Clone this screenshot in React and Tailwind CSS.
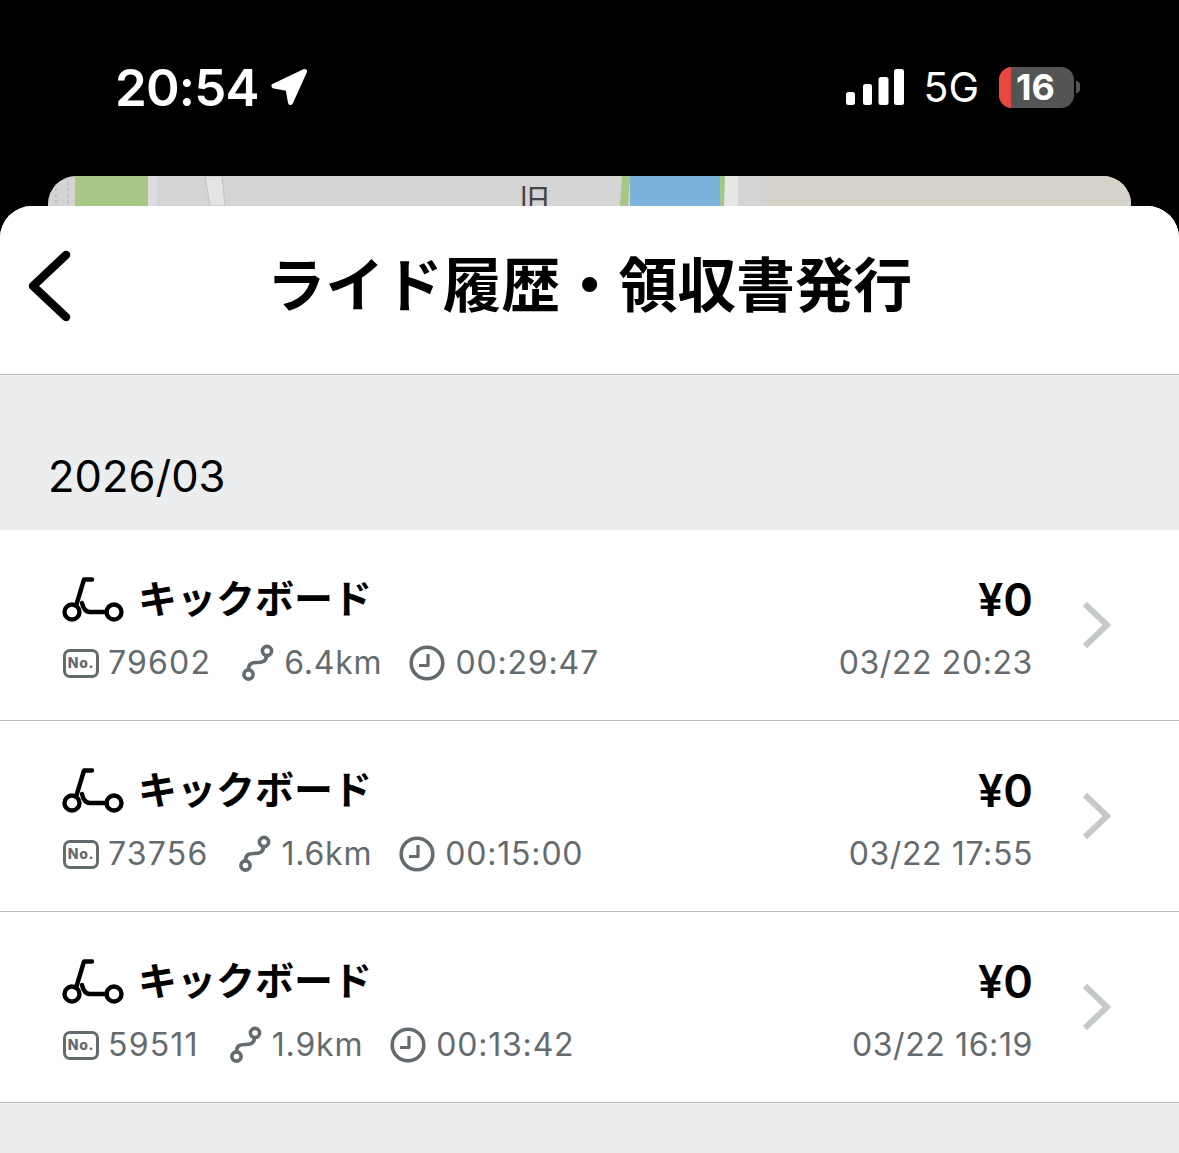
const latin = "font-['Inter','Noto_Sans_CJK_JP',sans-serif]";
const jp = "font-['Noto_Sans_CJK_JP','Noto_Sans',sans-serif]";

const rides = [
  { no: "79602", dist: "6.4km", time: "00:29:47", at: "03/22 20:23" },
  { no: "73756", dist: "1.6km", time: "00:15:00", at: "03/22 17:55" },
  { no: "59511", dist: "1.9km", time: "00:13:42", at: "03/22 16:19" },
];

function LocationArrow() {
  return (
    <svg width="40" height="40" viewBox="0 0 40 40" className="block">
      <path d="M35.5 4.5 L5 19 L19 21.5 L21.5 35.5 Z" fill="#fff" stroke="#fff" strokeWidth="5" strokeLinejoin="round" />
    </svg>
  );
}

function Signal() {
  return (
    <svg width="58" height="36" viewBox="0 0 58 36" className="block" fill="#fff">
      <rect x="0" y="23" width="9" height="13" rx="2.5" />
      <rect x="17" y="15" width="9" height="21" rx="2.5" />
      <rect x="32.5" y="8" width="10" height="28" rx="2.5" />
      <rect x="48" y="0" width="10" height="36" rx="2.5" />
    </svg>
  );
}

function Battery() {
  return (
    <div className="flex items-center gap-[2px]">
      <div className="relative h-[41px] w-[75px] overflow-hidden rounded-[13px] bg-[#545454]">
        <div className="h-full w-[12px] bg-[#e8483f]" />
        <span className={`absolute inset-y-0 left-[17px] flex items-center text-[36px] leading-none font-bold text-white ${latin}`}>16</span>
      </div>
      <div className="h-[12px] w-[4px] rounded-r-full bg-[#545454]" />
    </div>
  );
}

// Strip of the map that peeks out behind the sheet
function MapStrip() {
  return (
    <div className="mx-[48px] h-[30px] overflow-hidden rounded-t-[28px]">
      <svg width="1083" height="30" viewBox="0 0 1083 30" className="block">
        <rect width="1083" height="30" fill="#d4d4d4" />
        <rect x="717" width="366" height="30" fill="#d5d3ca" />
        <rect x="27" width="73" height="30" fill="#a6c785" />
        <path d="M100 0h9v30h-9z" fill="#dcdce0" />
        <path d="M157 0h17l3 30h-15z" fill="#e4e4e4" stroke="#c4c4c4" />
        <path d="M8 0v30M20 0v30" stroke="#bfc3c9" strokeWidth="2" strokeDasharray="3 3" />
        <path d="M574 0h8l-2 30h-8z" fill="#a6c785" />
        <rect x="582" width="90" height="30" fill="#7cb3dd" />
        <path d="M672 0h5v30h-5z" fill="#a6c785" />
        <path d="M677 0h13v30h-14z" fill="#e6e6e6" />
        <text x="471" y="35" fontSize="31" fill="#444" fontFamily="Noto Sans CJK JP">旧</text>
      </svg>
    </div>
  );
}

function ScooterIcon() {
  return (
    <svg width="62" height="46" viewBox="0 0 62 46" fill="none" stroke="#000" strokeWidth="4.4" strokeLinecap="round" strokeLinejoin="round" className="block shrink-0">
      <path d="M30 2.5 H22 L14 29" />
      <path d="M20 26 Q22 35 28 35 H45" />
      <circle cx="10" cy="35" r="7.5" />
      <circle cx="52" cy="35" r="7.5" />
    </svg>
  );
}

function NoBadge() {
  return (
    <div className={`ml-[1px] flex h-[29px] w-[36px] shrink-0 items-center justify-center rounded-[7px] border-[3.5px] border-[#636b6e] text-[14px] leading-none font-extrabold text-[#636b6e] ${latin}`}>
      No.
    </div>
  );
}

function RouteIcon() {
  return (
    <svg width="32" height="38" viewBox="0 0 32 38" fill="none" stroke="#636b6e" strokeWidth="3.6" className="block shrink-0">
      <circle cx="6.5" cy="30.5" r="4.6" />
      <circle cx="25" cy="7" r="4.6" />
      <path d="M24.5 12 C24 18 20 18.5 15 18.5 C9 18.5 6.5 20 6.5 26" />
    </svg>
  );
}

function ClockIcon() {
  return (
    <svg width="36" height="36" viewBox="0 0 36 36" fill="none" stroke="#636b6e" className="block shrink-0">
      <circle cx="18" cy="18" r="15.8" strokeWidth="3.6" />
      <path d="M19 9 V20.5 H10" strokeWidth="3.2" strokeLinejoin="round" />
    </svg>
  );
}

function RideRow({ ride }) {
  return (
    <div className="flex h-[191px] border-b border-[#b9b9b9] bg-white pl-[62px] pr-[68px]">
      <div className="min-w-0 flex-1 pt-[46px]">
        <div className="flex h-[48px] items-center gap-[14px]">
          <ScooterIcon />
          <span className={`pb-[7px] text-[39px] leading-none font-bold text-black ${jp}`}>キックボード</span>
        </div>
        <div className={`mt-[19px] flex h-[40px] items-center text-[32px] tracking-[0.8px] text-[#636b6e] ${latin}`}>
          <NoBadge />
          <span className="ml-[9px] tracking-[1.2px]">{ride.no}</span>
          <span className="ml-[31px]"><RouteIcon /></span>
          <span className="ml-[10px]">{ride.dist}</span>
          <span className="ml-[27px]"><ClockIcon /></span>
          <span className="ml-[10px]">{ride.time}</span>
        </div>
      </div>
      <div className={`flex flex-col items-end pt-[46px] ${latin}`}>
        <div className="flex h-[48px] items-center pb-[1px] text-[45px] leading-none font-semibold text-black">¥0</div>
        <div className="mt-[19px] flex h-[40px] items-center text-[32px] tracking-[0.6px] text-[#636b6e]">{ride.at}</div>
      </div>
      <div className="ml-[48px] flex items-center">
        <svg width="30" height="48" viewBox="0 0 30 48" fill="none" className="block">
          <path d="M4 3 L26 24 L4 45" stroke="#c5c9c9" strokeWidth="6" />
        </svg>
      </div>
    </div>
  );
}

export default function App() {
  return (
    <div className="flex h-[1153px] flex-col overflow-hidden bg-black">
      <div className="flex h-[176px] items-start justify-between pl-[115px] pr-[99px] pt-[60px]">
        <div className="flex h-[54px] items-center gap-[10px]">
          <span className={`text-[51px] leading-none font-semibold tracking-[-0.8px] text-white ${latin}`}>20:54</span>
          <LocationArrow />
        </div>
        <div className="flex h-[54px] items-center">
          <Signal />
          <span className={`ml-[19px] text-[41px] leading-none font-normal text-white ${latin}`}>5G</span>
          <span className="ml-[20px]"><Battery /></span>
        </div>
      </div>

      <MapStrip />

      <div className="flex flex-1 flex-col overflow-hidden rounded-t-[32px] bg-[#ecedef]">
        <header className="grid h-[169px] grid-cols-[120px_1fr_120px] items-center border-b border-[#b9b9b9] bg-white pb-[8px]">
          <div className="pl-[26px]">
            <svg width="48" height="72" viewBox="0 0 48 72" fill="none" className="block">
              <path d="M40 5 L7 36 L40 67" stroke="#000" strokeWidth="8.5" strokeLinecap="round" strokeLinejoin="round" />
            </svg>
          </div>
          <h1 className={`pb-[8px] text-center text-[58.7px] leading-none font-bold whitespace-nowrap text-black ${jp}`}>ライド履歴・領収書発行</h1>
          <div />
        </header>

        <div className="flex h-[155px] items-end pb-[29px] pl-[48px]">
          <span className={`text-[43.5px] leading-[50px] text-black ${latin}`}>2026/03</span>
        </div>

        {rides.map((ride) => (
          <RideRow key={ride.no} ride={ride} />
        ))}
      </div>
    </div>
  );
}
